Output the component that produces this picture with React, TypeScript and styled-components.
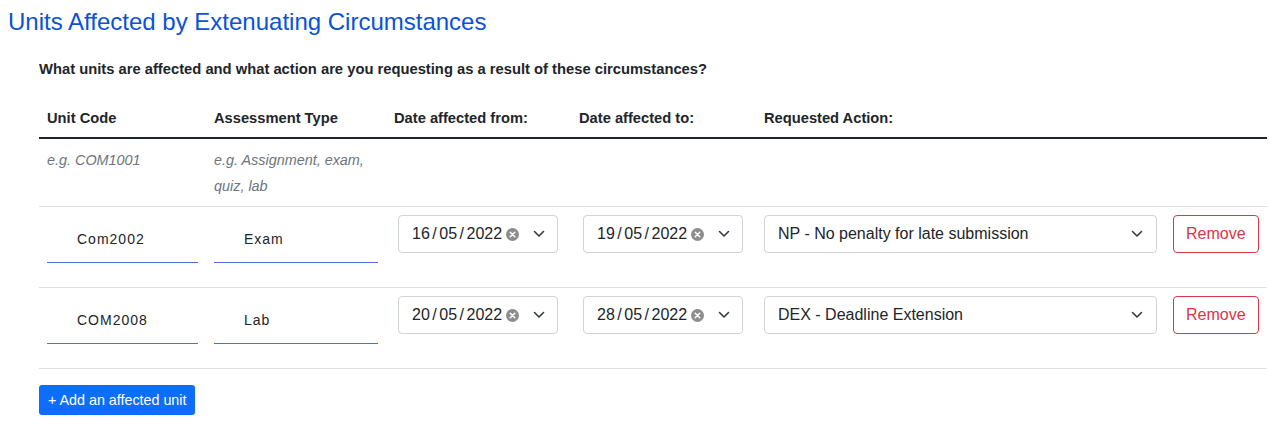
import React from 'react';
import styled, { createGlobalStyle } from 'styled-components';

const GlobalStyle = createGlobalStyle`
  body {
    margin: 8px 3px 8px 8px;
    font-family: "Liberation Sans", Arial, sans-serif;
    color: #212529;
    background: #fff;
  }
`;

const Title = styled.h1`
  margin: 0;
  font-size: 24px;
  font-weight: 400;
  line-height: 28px;
  color: #0a52d6;
`;

const Section = styled.div`
  padding: 0 0 0 31px;
`;

const Question = styled.p`
  margin: 24px 0 0;
  font-size: 14.75px;
  font-weight: 700;
  line-height: 18px;
`;

const Table = styled.table`
  margin-top: 20px;
  width: 1228px;
  border-collapse: collapse;
  table-layout: fixed;
`;

const HeadCell = styled.th<{ w: number }>`
  box-sizing: border-box;
  width: ${({ w }) => w}px;
  padding: 0 8px;
  height: 40px;
  text-align: left;
  font-size: 14.7px;
  font-weight: 700;
  border-bottom: 2px solid #212529;
`;

const HintCell = styled.td`
  padding: 8px 8px 7px;
  vertical-align: top;
  font-size: 14.4px;
  font-style: italic;
  line-height: 26px;
  color: #6c757d;
  border-bottom: 1px solid #dee2e6;
`;

const Cell = styled.td`
  padding: 8px 8px 24px;
  vertical-align: top;
  border-bottom: 1px solid #dee2e6;
`;

const LineInput = styled.div`
  box-sizing: border-box;
  height: 48px;
  padding-left: 30px;
  display: flex;
  align-items: center;
  font-size: 14px;
  letter-spacing: 1px;
  color: #212529;
  border-bottom: 1px solid #4f72cc;
`;

const BoxInput = styled.div<{ w?: number; indent?: number }>`
  box-sizing: border-box;
  height: 38px;
  width: ${({ w }) => (w ? `${w}px` : '100%')};
  margin-left: ${({ indent }) => indent ?? 0}px;
  padding: 0 13px;
  display: flex;
  align-items: center;
  border: 1px solid #ced4da;
  border-radius: 4px;
  font-size: 16px;
  color: #212529;
  background: #fff;

  svg {
    flex-shrink: 0;
  }
`;

const DateText = styled.span`
  flex: 1;
  white-space: nowrap;
`;

const Slash = styled.span`
  margin: 0 2.5px;
`;

const SelectText = styled.span`
  flex: 1;
  white-space: nowrap;
`;

const RemoveButton = styled.button`
  box-sizing: border-box;
  height: 38px;
  padding: 0 12px;
  border: 1px solid #dc3545;
  border-radius: 4px;
  background: #fff;
  color: #dc3545;
  font-family: inherit;
  font-size: 16px;
`;

const AddButton = styled.button`
  margin-top: 16px;
  height: 30px;
  padding: 0 9px;
  border: none;
  border-radius: 3px;
  background: #0d6efd;
  color: #fff;
  font-family: inherit;
  font-size: 14.3px;
`;

const ClearWrap = styled.span`
  display: flex;
  margin: 0 14px 0 4px;
`;

const Chevron = () => (
  <svg width="12" height="8" viewBox="0 0 12 8" fill="none">
    <path d="M1.5 1.5 L6 6 L10.5 1.5" stroke="#343a40" strokeWidth="1.6" strokeLinecap="round" strokeLinejoin="round" />
  </svg>
);

const ClearIcon = () => (
  <ClearWrap>
    <svg width="13" height="13" viewBox="0 0 12 12">
      <circle cx="6" cy="6" r="6" fill="#8d8d8d" />
      <path d="M3.9 3.9 L8.1 8.1 M8.1 3.9 L3.9 8.1" stroke="#fff" strokeWidth="1.4" strokeLinecap="round" />
    </svg>
  </ClearWrap>
);

const DateField: React.FC<{ value: string }> = ({ value }) => {
  const [d, m, y] = value.split('/');
  return (
    <BoxInput w={160} indent={4}>
      <DateText>
        {d}<Slash>/</Slash>{m}<Slash>/</Slash>{y}
      </DateText>
      <ClearIcon />
      <Chevron />
    </BoxInput>
  );
};

const rows = [
  { code: 'Com2002', type: 'Exam', from: '16/05/2022', to: '19/05/2022', action: 'NP - No penalty for late submission' },
  { code: 'COM2008', type: 'Lab', from: '20/05/2022', to: '28/05/2022', action: 'DEX - Deadline Extension' },
];

export default function App() {
  return (
    <>
      <GlobalStyle />
      <Title>Units Affected by Extenuating Circumstances</Title>
      <Section>
        <Question>What units are affected and what action are you requesting as a result of these circumstances?</Question>
        <Table>
          <thead>
            <tr>
              <HeadCell w={167}>Unit Code</HeadCell>
              <HeadCell w={180}>Assessment Type</HeadCell>
              <HeadCell w={185}>Date affected from:</HeadCell>
              <HeadCell w={185}>Date affected to:</HeadCell>
              <HeadCell w={409}>Requested Action:</HeadCell>
              <HeadCell w={102}></HeadCell>
            </tr>
          </thead>
          <tbody>
            <tr>
              <HintCell>e.g. COM1001</HintCell>
              <HintCell>e.g. Assignment, exam, quiz, lab</HintCell>
              <HintCell />
              <HintCell />
              <HintCell />
              <HintCell />
            </tr>
            {rows.map(r => (
              <tr key={r.code}>
                <Cell><LineInput>{r.code}</LineInput></Cell>
                <Cell><LineInput>{r.type}</LineInput></Cell>
                <Cell><DateField value={r.from} /></Cell>
                <Cell><DateField value={r.to} /></Cell>
                <Cell>
                  <BoxInput>
                    <SelectText>{r.action}</SelectText>
                    <Chevron />
                  </BoxInput>
                </Cell>
                <Cell><RemoveButton>Remove</RemoveButton></Cell>
              </tr>
            ))}
          </tbody>
        </Table>
        <AddButton>+ Add an affected unit</AddButton>
      </Section>
    </>
  );
}
